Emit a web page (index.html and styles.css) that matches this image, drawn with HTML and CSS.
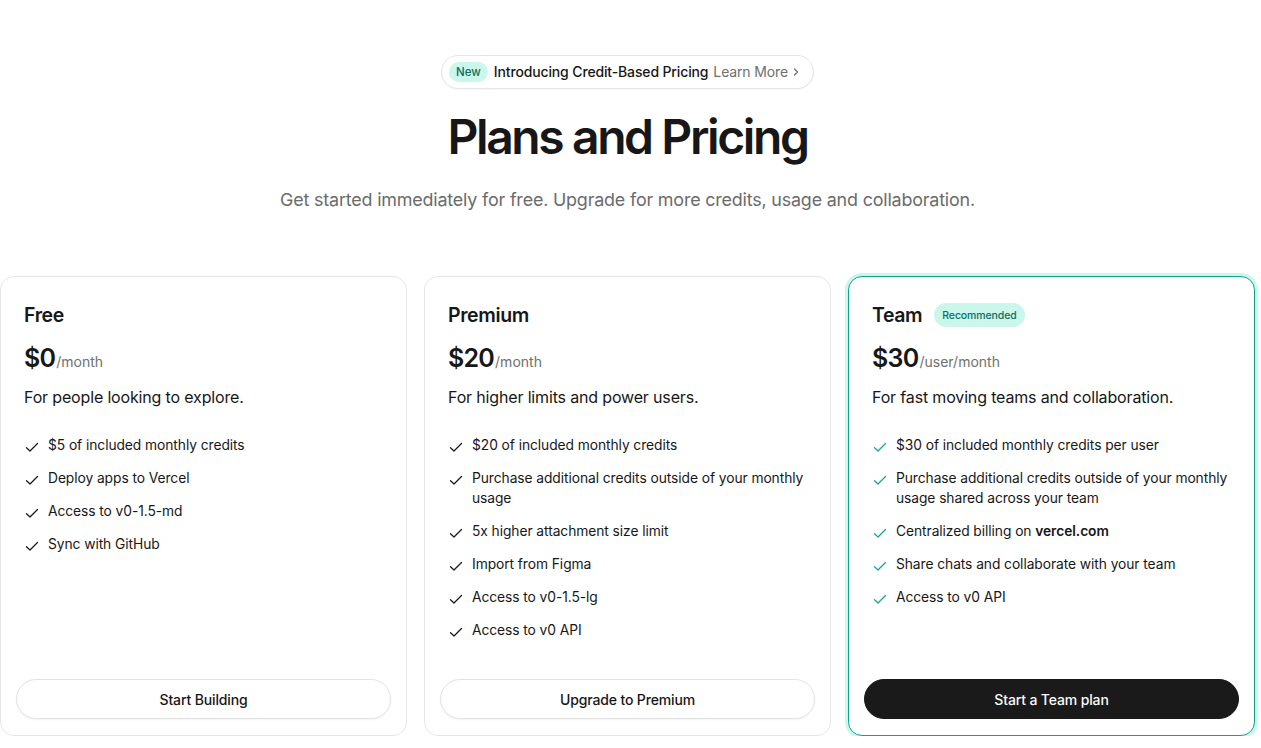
FILE: index.html
```html
<!DOCTYPE html>
<html lang="en">
<head>
<meta charset="utf-8">
<title>Plans and Pricing</title>
<link rel="stylesheet" href="styles.css">
</head>
<body>
<main class="page">
  <header class="hero">
    <a class="announce" href="#">
      <span class="announce-new">New</span>
      <span class="announce-text">Introducing Credit-Based Pricing</span>
      <span class="announce-more">Learn More</span>
      <svg class="announce-chev" width="12" height="12" viewBox="0 0 12 12" fill="none"><path d="M4.5 3L7.5 6L4.5 9" stroke="currentColor" stroke-width="1.3" stroke-linecap="round" stroke-linejoin="round"/></svg>
    </a>
    <h1 class="title">Plans and Pricing</h1>
    <p class="subtitle">Get started immediately for free. Upgrade for more credits, usage and collaboration.</p>
  </header>

  <section class="plans">
    <article class="plan">
      <div class="plan-body">
        <div class="plan-head"><h2 class="plan-name">Free</h2></div>
        <div class="plan-price"><span class="amount">$0</span><span class="per">/month</span></div>
        <p class="plan-desc">For people looking to explore.</p>
        <ul class="features">
          <li><svg class="check" viewBox="0 0 16 16"><path d="M2.5 8.8L6 12L13.5 4.5"/></svg><span>$5 of included monthly credits</span></li>
          <li><svg class="check" viewBox="0 0 16 16"><path d="M2.5 8.8L6 12L13.5 4.5"/></svg><span>Deploy apps to Vercel</span></li>
          <li><svg class="check" viewBox="0 0 16 16"><path d="M2.5 8.8L6 12L13.5 4.5"/></svg><span>Access to v0-1.5-md</span></li>
          <li><svg class="check" viewBox="0 0 16 16"><path d="M2.5 8.8L6 12L13.5 4.5"/></svg><span>Sync with GitHub</span></li>
        </ul>
      </div>
      <div class="plan-foot"><button class="btn">Start Building</button></div>
    </article>

    <article class="plan">
      <div class="plan-body">
        <div class="plan-head"><h2 class="plan-name">Premium</h2></div>
        <div class="plan-price"><span class="amount">$20</span><span class="per">/month</span></div>
        <p class="plan-desc">For higher limits and power users.</p>
        <ul class="features">
          <li><svg class="check" viewBox="0 0 16 16"><path d="M2.5 8.8L6 12L13.5 4.5"/></svg><span>$20 of included monthly credits</span></li>
          <li><svg class="check" viewBox="0 0 16 16"><path d="M2.5 8.8L6 12L13.5 4.5"/></svg><span>Purchase additional credits outside of your monthly usage</span></li>
          <li><svg class="check" viewBox="0 0 16 16"><path d="M2.5 8.8L6 12L13.5 4.5"/></svg><span>5x higher attachment size limit</span></li>
          <li><svg class="check" viewBox="0 0 16 16"><path d="M2.5 8.8L6 12L13.5 4.5"/></svg><span>Import from Figma</span></li>
          <li><svg class="check" viewBox="0 0 16 16"><path d="M2.5 8.8L6 12L13.5 4.5"/></svg><span>Access to v0-1.5-lg</span></li>
          <li><svg class="check" viewBox="0 0 16 16"><path d="M2.5 8.8L6 12L13.5 4.5"/></svg><span>Access to v0 API</span></li>
        </ul>
      </div>
      <div class="plan-foot"><button class="btn">Upgrade to Premium</button></div>
    </article>

    <article class="plan plan-featured">
      <div class="plan-body">
        <div class="plan-head"><h2 class="plan-name">Team</h2><span class="tag">Recommended</span></div>
        <div class="plan-price"><span class="amount">$30</span><span class="per">/user/month</span></div>
        <p class="plan-desc">For fast moving teams and collaboration.</p>
        <ul class="features">
          <li><svg class="check" viewBox="0 0 16 16"><path d="M2.5 8.8L6 12L13.5 4.5"/></svg><span>$30 of included monthly credits per user</span></li>
          <li><svg class="check" viewBox="0 0 16 16"><path d="M2.5 8.8L6 12L13.5 4.5"/></svg><span>Purchase additional credits outside of your monthly usage shared across your team</span></li>
          <li><svg class="check" viewBox="0 0 16 16"><path d="M2.5 8.8L6 12L13.5 4.5"/></svg><span>Centralized billing on <strong>vercel.com</strong></span></li>
          <li><svg class="check" viewBox="0 0 16 16"><path d="M2.5 8.8L6 12L13.5 4.5"/></svg><span>Share chats and collaborate with your team</span></li>
          <li><svg class="check" viewBox="0 0 16 16"><path d="M2.5 8.8L6 12L13.5 4.5"/></svg><span>Access to v0 API</span></li>
        </ul>
      </div>
      <div class="plan-foot"><button class="btn btn-dark">Start a Team plan</button></div>
    </article>
  </section>
</main>
</body>
</html>
```

FILE: styles.css
```css
* { box-sizing: border-box; }

html, body {
  margin: 0;
  padding: 0;
  background: #ffffff;
}

body {
  font-family: Inter, "Noto Sans", "Liberation Sans", sans-serif;
  color: #171717;
  -webkit-font-smoothing: antialiased;
}

.page {
  width: 1255px;
  padding-top: 55px;
}

.hero {
  display: flex;
  flex-direction: column;
  align-items: center;
}

.announce {
  display: inline-flex;
  align-items: center;
  height: 34px;
  padding: 0 11px 0 7px;
  border: 1px solid #e5e5e5;
  border-radius: 999px;
  text-decoration: none;
  font-size: 14px;
  line-height: 20px;
  background: #fff;
  box-shadow: 0 1px 2px rgba(0,0,0,0.04);
}

.announce-new {
  display: inline-flex;
  align-items: center;
  height: 20px;
  padding: 0 7px;
  border-radius: 999px;
  background: #cbf6ec;
  color: #0b6e5f;
  font-size: 11.5px;
  font-weight: 500;
  margin-right: 6px;
}

.announce-text {
  color: #171717;
  font-weight: 500;
  letter-spacing: -0.01em;
  margin-right: 5px;
}

.announce-more {
  color: #6f6f6f;
  letter-spacing: -0.01em;
  margin-right: 2px;
}

.announce-chev {
  color: #6f6f6f;
}

.title {
  margin: 20px 0 0;
  font-size: 48px;
  line-height: 56px;
  font-weight: 600;
  letter-spacing: -0.05em;
  color: #171717;
}

.subtitle {
  margin: 21px 0 0;
  font-size: 17.9px;
  line-height: 28px;
  color: #6b6b6b;
  letter-spacing: -0.01em;
}

.plans {
  display: grid;
  grid-template-columns: repeat(3, 407px);
  gap: 17px;
  margin-top: 62px;
}

.plan {
  display: flex;
  flex-direction: column;
  height: 460px;
  border: 1px solid #e6e6e6;
  border-radius: 14px;
  background: #fff;
}

.plan-featured {
  border-color: #159d89;
  box-shadow: 0 0 0 3px #c9f8ee;
}

.plan-body {
  flex: 1;
  padding: 24px 23px 0;
}

.plan-head {
  display: flex;
  align-items: center;
  gap: 12px;
  height: 28px;
}

.plan-name {
  margin: 0;
  font-size: 19.5px;
  line-height: 28px;
  font-weight: 600;
  letter-spacing: -0.02em;
  color: #171717;
}

.tag {
  display: inline-flex;
  align-items: center;
  height: 24px;
  padding: 0 8px;
  border-radius: 999px;
  background: #cbf6ec;
  color: #0b6e5f;
  font-size: 10.5px;
  font-weight: 500;
  letter-spacing: -0.01em;
}

.plan-price {
  display: flex;
  align-items: baseline;
  margin-top: 13px;
  height: 32px;
}

.amount {
  font-size: 25px;
  line-height: 32px;
  font-weight: 600;
  letter-spacing: -0.03em;
  color: #171717;
}

.per {
  font-size: 14px;
  color: #707070;
  margin-left: 1px;
}

.plan-desc {
  margin: 11px 0 0;
  font-size: 16px;
  line-height: 24px;
  color: #171717;
  letter-spacing: -0.01em;
}

.features {
  list-style: none;
  margin: 26px 0 0;
  padding: 0;
  display: flex;
  flex-direction: column;
  gap: 13px;
}

.features li {
  display: flex;
  align-items: flex-start;
  gap: 8px;
  font-size: 13.8px;
  line-height: 20px;
  color: #171717;
  letter-spacing: -0.005em;
}

.features strong {
  font-weight: 600;
}

.check {
  flex: none;
  width: 16px;
  height: 16px;
  margin-top: 4px;
  fill: none;
  stroke: #1a1a1a;
  stroke-width: 1.3;
  stroke-linecap: round;
  stroke-linejoin: round;
}

.plan-featured .check {
  stroke: #1fa391;
}

.plan-foot {
  padding: 0 15px 16px;
}

.btn {
  display: flex;
  align-items: center;
  justify-content: center;
  width: 100%;
  height: 40px;
  border: 1px solid #e3e3e3;
  border-radius: 999px;
  background: #fff;
  color: #171717;
  font-family: inherit;
  font-size: 14px;
  font-weight: 500;
  letter-spacing: -0.01em;
  box-shadow: 0 1px 2px rgba(0,0,0,0.05);
  cursor: pointer;
}

.btn-dark {
  background: #1a1a1b;
  border-color: #1a1a1b;
  color: #fafafa;
  box-shadow: none;
}
```
